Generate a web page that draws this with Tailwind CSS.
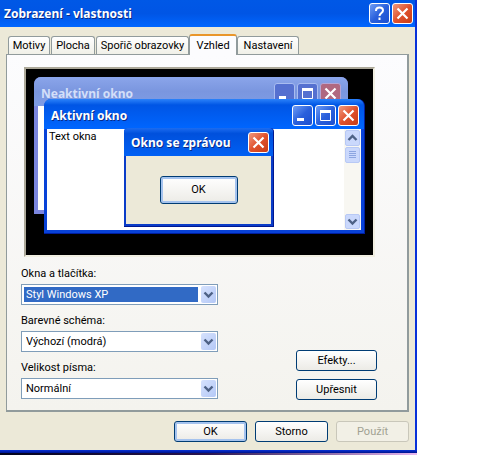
<!DOCTYPE html>
<html lang="cs">
<head>
  <meta charset="UTF-8">
  <meta name="viewport" content="width=device-width, initial-scale=1.0">
  <title>Zobrazení - vlastnosti</title>
  <script src="https://cdn.jsdelivr.net/npm/@tailwindcss/browser@4"></script>
</head>
<body class="bg-white font-['Roboto',sans-serif] text-[11px] leading-4 text-black">
  <!-- Dialog -->
  <main class="w-full max-w-[417px] bg-[#ece9d8] border-r-2 border-[#0831d9]">
    <header class="h-[27px] pl-1 pr-[2px] flex items-center bg-linear-to-b from-[#0058e6] via-[#0055e5] to-[#0066ff]">
      <h1 class="flex-1 pt-px font-['Noto_Sans','Open_Sans',sans-serif] font-bold text-xs text-white [text-shadow:1px_1px_#0a2a88]">Zobrazení - vlastnosti</h1>
      <div class="flex gap-[2px]">
        <button type="button" aria-label="Nápověda" class="size-[21px] flex items-center justify-center rounded-[3px] border border-white bg-linear-to-br from-[#6f9cf5] via-[#2a60dc] to-[#1c4fd0]">
          <svg class="size-[17px]" viewBox="0 0 17 17" fill="none" stroke="#fff" stroke-width="2"><path d="M5 6V5.500C5 3.800 6.500 2.500 8.500 2.500S12 3.700 12 5.500C12 8 8.500 8 8.500 11M8.500 12.500v2.500"/></svg>
        </button>
        <button type="button" aria-label="Zavřít" class="size-[21px] flex items-center justify-center rounded-[3px] border border-white bg-linear-to-br from-[#f0987c] via-[#e0512c] to-[#c93c14]">
          <svg class="size-[17px]" viewBox="0 0 17 17" stroke="#fff" stroke-width="2.200"><path d="M3.500 3.500l10 10M13.500 3.500l-10 10"/></svg>
        </button>
      </div>
    </header>

    <div class="pt-[7px] px-[6px] pb-[8px]">
      <!-- Karty -->
      <nav role="tablist" class="flex items-end pl-[2px] h-5">
        <button type="button" role="tab" class="h-[18px] w-[42px] mr-px rounded-t-[3px] border border-b-0 border-[#919b9c] bg-linear-to-b from-white to-[#f0f0e8] whitespace-nowrap">Motivy</button>
        <button type="button" role="tab" class="h-[18px] w-[44px] mr-px rounded-t-[3px] border border-b-0 border-[#919b9c] bg-linear-to-b from-white to-[#f0f0e8] whitespace-nowrap">Plocha</button>
        <button type="button" role="tab" class="h-[18px] w-[93px] rounded-t-[3px] border border-b-0 border-[#919b9c] bg-linear-to-b from-white to-[#f0f0e8] whitespace-nowrap">Spořič obrazovky</button>
        <button type="button" role="tab" aria-selected="true" class="relative h-[21px] w-[48px] -mb-px rounded-t-[3px] border border-t-2 border-b-0 border-[#919b9c] border-t-[#e9962a] bg-[#fcfcfe] whitespace-nowrap">Vzhled</button>
        <button type="button" role="tab" class="h-[18px] w-[62px] rounded-t-[3px] border border-b-0 border-[#919b9c] bg-linear-to-b from-white to-[#f0f0e8] whitespace-nowrap">Nastavení</button>
      </nav>

      <section class="border border-r-2 border-b-2 border-[#919b9c] bg-linear-to-b from-[#fcfcfe] to-[#f4f3ee] pt-3 pl-[14px] pr-[30px] pb-[10px]">
        <!-- Náhled -->
        <div class="ml-[3px] mr-[2px] relative h-[190px] border-2 border-t-[#aca899] border-l-[#aca899] border-b-[#f1efe2] border-r-[#f1efe2] bg-black">
          <div class="absolute left-2 right-[25px] top-2 h-[137px] rounded-t-[7px] bg-[#7b86df] px-1 pb-1 flex flex-col">
            <div class="h-[29px] -mx-1 pl-[7px] pr-[7px] shrink-0 rounded-t-[7px] flex items-center bg-linear-to-b from-[#8ba5ea] via-[#7a96df] to-[#7e9ce5]">
              <span class="flex-1 pt-1 font-['Noto_Sans','Open_Sans',sans-serif] font-bold text-xs text-[#d3dff9]">Neaktivní okno</span>
              <div class="flex gap-[2px] pt-1">
                <span class="size-[21px] rounded-[3px] border border-[#a9bcf0] bg-[#5570d0]"><svg class="size-[19px]" viewBox="0 0 19 19"><path fill="#fff" d="M4 12h7v3H4z"/></svg></span>
                <span class="size-[21px] rounded-[3px] border border-[#a9bcf0] bg-[#5570d0]"><svg class="size-[19px]" viewBox="0 0 19 19" fill="none" stroke="#fff"><path d="M4.500 5v9.500h10V5"/><path stroke-width="3" d="M4 5.500h11"/></svg></span>
                <span class="size-[21px] rounded-[3px] border border-[#b5a5d5] bg-[#b06880]"><svg class="size-[19px]" viewBox="0 0 19 19" stroke="#fff" stroke-width="2.200"><path d="M4.500 4.500l10 10M14.500 4.500l-10 10"/></svg></span>
              </div>
            </div>
            <div class="flex-1 bg-white"></div>
          </div>

          <div class="absolute left-[18px] right-2 top-[30px] h-[135px] rounded-t-[7px] bg-[#0842d8] border-b border-r border-[#001ea0] px-[3px] pb-[3px] flex flex-col">
            <div class="h-[30px] -mx-[3px] pl-[7px] pr-[5px] shrink-0 rounded-t-[7px] flex items-center bg-linear-to-b from-[#2b82fa] via-[#0055e5] via-20% to-[#0066ff]">
              <span class="flex-1 pt-1 font-['Noto_Sans','Open_Sans',sans-serif] font-bold text-xs text-white [text-shadow:1px_1px_#0a2a88]">Aktivní okno</span>
              <div class="flex gap-[2px] pt-[2px]">
                <span class="size-[21px] rounded-[3px] border border-white bg-linear-to-br from-[#6f9cf5] via-[#2a60dc] to-[#1c4fd0]"><svg class="size-[19px]" viewBox="0 0 19 19"><path fill="#fff" d="M4 12h7v3H4z"/></svg></span>
                <span class="size-[21px] rounded-[3px] border border-white bg-linear-to-br from-[#6f9cf5] via-[#2a60dc] to-[#1c4fd0]"><svg class="size-[19px]" viewBox="0 0 19 19" fill="none" stroke="#fff"><path d="M4.500 5v9.500h10V5"/><path stroke-width="3" d="M4 5.500h11"/></svg></span>
                <span class="size-[21px] rounded-[3px] border border-white bg-linear-to-br from-[#f0987c] via-[#e0512c] to-[#c93c14]"><svg class="size-[19px]" viewBox="0 0 19 19" stroke="#fff" stroke-width="2.200"><path d="M4.500 4.500l10 10M14.500 4.500l-10 10"/></svg></span>
              </div>
            </div>
            <div class="flex-1 flex bg-white">
              <p class="flex-1 pl-[2px]">Text okna</p>
              <div class="w-[17px] p-px bg-[#f8f7f2] flex flex-col">
                <span class="h-4 rounded-[2px] border border-[#b8c9f5] bg-[#cad8fc]"><svg class="w-[13px] h-[14px]" viewBox="0 0 13 14" fill="none" stroke="#4d6185" stroke-width="2.400"><path d="M2.500 9l4-4 4 4"/></svg></span>
                <span class="h-4 mt-px rounded-[2px] border border-[#b8c9f5] bg-[#cad8fc]"><svg class="w-[13px] h-[14px]" viewBox="0 0 13 14" stroke="#8ca5e0"><path d="M3 3.500h7M3 5.500h7M3 7.500h7M3 9.500h7"/></svg></span>
                <span class="h-[15px] mt-auto rounded-[2px] border border-[#b8c9f5] bg-[#cad8fc]"><svg class="w-[13px] h-[13px]" viewBox="0 0 13 13" fill="none" stroke="#4d6185" stroke-width="2.400"><path d="M2.500 4.500l4 4 4-4"/></svg></span>
              </div>
            </div>
          </div>

          <div class="absolute left-[98px] top-[59px] w-[150px] h-[99px] rounded-t-[4px] bg-[#0a3cc8] border-b border-r border-[#001890] px-[2px] pb-[2px] flex flex-col">
            <div class="h-7 -mx-[2px] pl-[7px] pr-1 shrink-0 rounded-t-[4px] flex items-center bg-linear-to-b from-[#1c6cf0] via-[#0050dc] via-20% to-[#0060f4]">
              <span class="flex-1 pt-px font-['Noto_Sans','Open_Sans',sans-serif] font-bold text-xs whitespace-nowrap text-white [text-shadow:1px_1px_#0a2a88]">Okno se zprávou</span>
              <span class="size-[21px] rounded-[3px] border border-white bg-linear-to-br from-[#f0987c] via-[#e0512c] to-[#c93c14]"><svg class="size-[19px]" viewBox="0 0 19 19" stroke="#fff" stroke-width="2.200"><path d="M4.500 4.500l10 10M14.500 4.500l-10 10"/></svg></span>
            </div>
            <div class="flex-1 flex items-center justify-center bg-[#ece9d8]">
              <button type="button" class="w-[78px] h-7 rounded-[3px] border border-[#003c74] bg-linear-to-b from-white to-[#ecebe6] shadow-[inset_0_0_0_2px_#a5c3ee]">OK</button>
            </div>
          </div>
        </div>

        <!-- Nastavení vzhledu -->
        <div class="flex items-end justify-between pt-[9px]">
          <form class="w-[197px] pb-px">
            <label for="styl" class="block mb-[2px]">Okna a tlačítka:</label>
            <div class="flex h-[21px] mb-2 border border-[#7f9db9] bg-white">
              <select id="styl" class="flex-1 m-[2px] mr-[3px] pl-[2px] appearance-none bg-[#316ac5] text-white leading-[15px]"><option>Styl Windows XP</option></select>
              <span class="w-[15px] my-px mr-px rounded-[2px] bg-linear-to-br from-[#d6e2fd] to-[#b4c8f6] pointer-events-none"><svg class="w-[15px] h-[17px]" viewBox="0 0 15 17" fill="none" stroke="#4d6185" stroke-width="2.400"><path d="M3.500 6.500l4 4 4-4"/></svg></span>
            </div>
            <label for="schema" class="block mb-[2px]">Barevné schéma:</label>
            <div class="flex h-[21px] mb-2 border border-[#7f9db9] bg-white">
              <select id="schema" class="flex-1 m-[2px] mr-[3px] pl-[2px] appearance-none bg-white leading-[15px]"><option>Výchozí (modrá)</option></select>
              <span class="w-[15px] my-px mr-px rounded-[2px] bg-linear-to-br from-[#d6e2fd] to-[#b4c8f6] pointer-events-none"><svg class="w-[15px] h-[17px]" viewBox="0 0 15 17" fill="none" stroke="#4d6185" stroke-width="2.400"><path d="M3.500 6.500l4 4 4-4"/></svg></span>
            </div>
            <label for="pismo" class="block mb-[2px]">Velikost písma:</label>
            <div class="flex h-[21px] border border-[#7f9db9] bg-white">
              <select id="pismo" class="flex-1 m-[2px] mr-[3px] pl-[2px] appearance-none bg-white leading-[15px]"><option>Normální</option></select>
              <span class="w-[15px] my-px mr-px rounded-[2px] bg-linear-to-br from-[#d6e2fd] to-[#b4c8f6] pointer-events-none"><svg class="w-[15px] h-[17px]" viewBox="0 0 15 17" fill="none" stroke="#4d6185" stroke-width="2.400"><path d="M3.500 6.500l4 4 4-4"/></svg></span>
            </div>
          </form>
          <div class="flex flex-col gap-2 w-[81px]">
            <button type="button" class="h-[21px] rounded-[3px] border border-[#003c74] bg-linear-to-b from-white to-[#ecebe6]">Efekty...</button>
            <button type="button" class="h-[21px] rounded-[3px] border border-[#003c74] bg-linear-to-b from-white to-[#ecebe6]">Upřesnit</button>
          </div>
        </div>
      </section>

      <div class="flex justify-end gap-2 pt-[9px]">
        <button type="button" class="w-[73px] h-[21px] rounded-[3px] border border-[#003c74] bg-linear-to-b from-white to-[#ecebe6] shadow-[inset_0_0_0_2px_#a5c3ee]">OK</button>
        <button type="button" class="w-[73px] h-[21px] rounded-[3px] border border-[#003c74] bg-linear-to-b from-white to-[#ecebe6]">Storno</button>
        <button type="button" disabled class="w-[73px] h-[21px] rounded-[3px] border border-[#c9c7ba] bg-[#f2f0e6] text-[#a1a192]">Použít</button>
      </div>
    </div>
    <div class="h-[3px] -mr-[2px] bg-linear-to-b from-[#0831d9] to-[#00138c]"></div>
  </main>
  <!-- Proužek plochy pod dialogem -->
  <div class="h-[2px] max-w-[417px] bg-linear-to-r from-[#04041c] via-[#2a1450] to-[#e8b8f0]"></div>
</body>
</html>
